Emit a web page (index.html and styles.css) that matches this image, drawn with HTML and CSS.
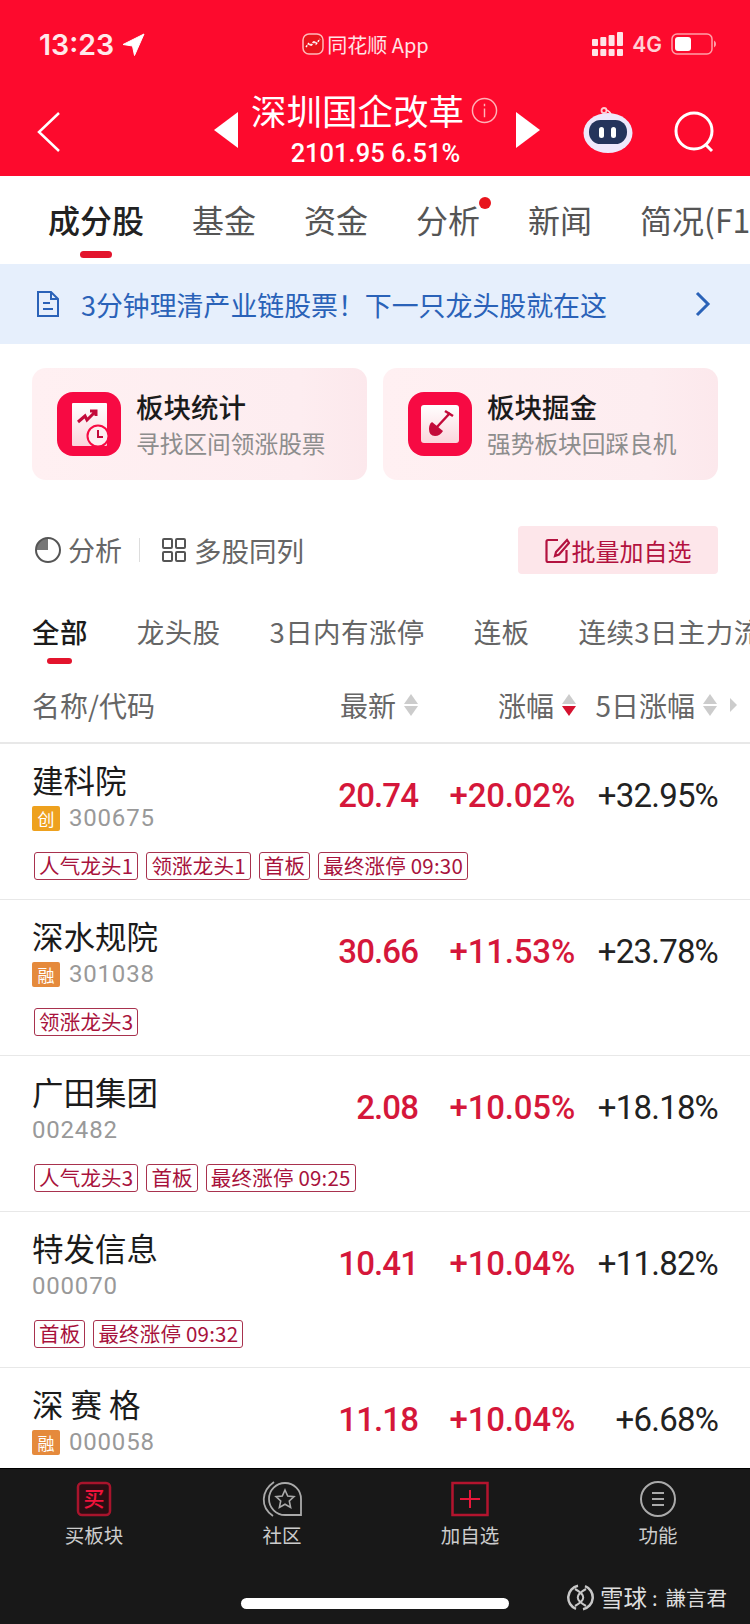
FILE: index.html
```html
<!DOCTYPE html>
<html lang="zh-CN">
<head>
    <meta charset="UTF-8">
    <meta name="viewport" content="width=device-width, initial-scale=1.0">
    <title>深圳国企改革</title>
    <link rel="stylesheet" href="styles.css">
</head>
<body>
    <div class="page">
        <header class="top">
            <div class="status">
                <div class="status-time">
                    <span>13:23</span>
                    <svg width="23" height="23" viewBox="0 0 23 23"><path d="M22 1 1 11.500 10.500 13 12.500 22.500Z" fill="#fff" stroke="#fff" stroke-linejoin="round"/></svg>
                </div>
                <div class="status-app">
                    <svg width="22" height="22" viewBox="0 0 22 22"><rect x="1" y="1" width="20" height="20" rx="6" fill="#e8141c" stroke="#ffb9b9" stroke-width="1.500"/><path d="M4 14 7 10 9 13 12 8 14 11 18 6" fill="none" stroke="#fff" stroke-width="1.500" stroke-dasharray="2 1"/></svg>
                    <span>同花顺 App</span>
                </div>
                <div class="status-right">
                    <svg width="31" height="24" viewBox="0 0 31 24" fill="#ffe3e6"><rect x="0" y="7" width="6" height="7" rx="1"/><rect x="8.300" y="5" width="6" height="9" rx="1"/><rect x="16.600" y="3" width="6" height="11" rx="1"/><rect x="25" y="0" width="6" height="14" rx="1"/><rect x="0" y="17" width="6" height="7" rx="1"/><rect x="8.300" y="17" width="6" height="7" rx="1"/><rect x="16.600" y="17" width="6" height="7" rx="1"/><rect x="25" y="17" width="6" height="7" rx="1"/></svg>
                    <span class="status-net">4G</span>
                    <svg width="46" height="24" viewBox="0 0 46 24"><rect x="1" y="2" width="40" height="20" rx="5" fill="none" stroke="#ffa0a8" stroke-width="1.500"/><rect x="4" y="5" width="16" height="14" rx="3" fill="#fff"/><path d="M43 8.500a4 4 0 0 1 0 7z" fill="#ffa0a8"/></svg>
                </div>
            </div>
            <div class="nav">
                <svg class="nav-back" width="26" height="42" viewBox="0 0 26 42"><path d="M23 2 3 21l20 19" fill="none" stroke="#fff" stroke-width="2.500"/></svg>
                <div class="nav-center">
                    <svg class="nav-arrow" width="24" height="36" viewBox="0 0 24 36"><path d="M24 0v36L0 18z" fill="#fff"/></svg>
                    <div class="nav-title">
                        <div class="nav-name">
                            <span>深圳国企改革</span>
                            <svg width="27" height="27" viewBox="0 0 28 28" fill="none" stroke="#ffb3b8" stroke-width="1.500"><circle cx="14" cy="14" r="12.500"/><path d="M14 12v9M14 7v2.500"/></svg>
                        </div>
                        <div class="nav-quote">2101.95 6.51%</div>
                    </div>
                    <svg class="nav-arrow" width="24" height="36" viewBox="0 0 24 36"><path d="M0 0v36l24-18z" fill="#fff"/></svg>
                </div>
                <svg class="nav-robot" width="50" height="46" viewBox="0 0 50 46"><circle cx="21" cy="3.500" r="2.500" fill="none" stroke="#ffc9cf" stroke-width="1.800"/><path d="M23 3q4 1 5 5" fill="none" stroke="#ffdde0" stroke-width="1.800"/><ellipse cx="25" cy="26" rx="24.500" ry="20" fill="#efe8fb"/><rect x="6" y="13" width="38" height="24" rx="11.500" fill="#25345c"/><rect x="16" y="20" width="5" height="11" rx="2.500" fill="#fff"/><rect x="28" y="20" width="5" height="11" rx="2.500" fill="#fff"/></svg>
                <svg class="nav-search" width="42" height="42" viewBox="0 0 42 42" fill="none" stroke="#fff" stroke-width="3"><circle cx="20" cy="20" r="18"/><path d="m31 33 7 7"/></svg>
            </div>
        </header>

        <nav class="tabs">
            <span class="tab tab-on">成分股</span>
            <span class="tab">基金</span>
            <span class="tab">资金</span>
            <span class="tab tab-dot">分析</span>
            <span class="tab">新闻</span>
            <span class="tab">简况(F10)</span>
        </nav>

        <div class="banner">
            <svg width="24" height="28" viewBox="0 0 24 28" fill="none" stroke="#2a62b8" stroke-width="2"><path d="M2 2h13l7 7v17H2zM15 2v7h7M7 13h7M7 19h10"/></svg>
            <span class="banner-text">3分钟理清产业链股票！下一只龙头股就在这</span>
            <svg width="16" height="26" viewBox="0 0 16 26"><path d="m2 2 11 11L2 24" fill="none" stroke="#2a62b8" stroke-width="3"/></svg>
        </div>

        <div class="cards">
            <div class="card">
                <svg class="card-icon" width="66" height="66" viewBox="0 0 66 66"><defs><linearGradient id="inner" x1="0" y1="0" x2="0" y2="1"><stop offset="0" stop-color="#fff"/><stop offset="1" stop-color="#fbd5dc"/></linearGradient></defs><rect x="1" y="1" width="64" height="64" rx="16" fill="#f70a43"/><rect x="16" y="12" width="35" height="43" rx="1" fill="url(#inner)"/><path d="m22 31 7-6 2 4 8-8m-5-1h6v5" fill="none" stroke="#c30a3a" stroke-width="3"/><circle cx="42" cy="45" r="10.500" fill="#fdeef0" stroke="#f70a43" stroke-width="2"/><path d="M42 39v7h5" fill="none" stroke="#c30a3a" stroke-width="2"/></svg>
                <div class="card-text">
                    <div class="card-title">板块统计</div>
                    <div class="card-sub">寻找区间领涨股票</div>
                </div>
            </div>
            <div class="card">
                <svg class="card-icon" width="66" height="66" viewBox="0 0 66 66"><rect x="1" y="1" width="64" height="64" rx="16" fill="#f70a43"/><rect x="14" y="14" width="38" height="38" rx="3" fill="url(#inner)"/><path d="m30 36 13-14" stroke="#c30a3a" stroke-width="2.500"/><path d="m38 20 8 5" stroke="#c30a3a" stroke-width="2.500"/><path d="M25 31 36 40Q33 45 28 45 22 45 22 38 22 33 25 31z" fill="#c30a3a"/></svg>
                <div class="card-text">
                    <div class="card-title">板块掘金</div>
                    <div class="card-sub">强势板块回踩良机</div>
                </div>
            </div>
        </div>

        <div class="tools">
            <svg width="28" height="28" viewBox="0 0 28 28"><path d="M14 14V2A12 12 0 0 0 2 14z" fill="#777"/><circle cx="14" cy="14" r="12" fill="none" stroke="#555" stroke-width="2"/></svg>
            <span class="tool-label">分析</span>
            <span class="tool-sep"></span>
            <svg width="24" height="24" viewBox="0 0 24 24" fill="none" stroke="#555" stroke-width="2"><rect x="1" y="1" width="9" height="9" rx="1"/><rect x="14" y="1" width="9" height="9" rx="1"/><rect x="1" y="14" width="9" height="9" rx="1"/><rect x="14" y="14" width="9" height="9" rx="1"/></svg>
            <span class="tool-label">多股同列</span>
            <div class="batch">
                <svg width="25" height="25" viewBox="0 0 25 25" fill="none" stroke="#b3123f" stroke-width="2.200"><path d="M13 2H3a1.500 1.500 0 0 0-1.500 1.500v19A1.500 1.500 0 0 0 3 24h17a1.500 1.500 0 0 0 1.500-1.500V12M22 2 11 14l-1 4 4-1.500L24 5z"/></svg>
                <span>批量加自选</span>
            </div>
        </div>

        <div class="subtabs">
            <span class="subtab subtab-on">全部</span>
            <span class="subtab">龙头股</span>
            <span class="subtab">3日内有涨停</span>
            <span class="subtab">连板</span>
            <span class="subtab">连续3日主力流入</span>
        </div>

        <div class="thead">
            <span class="th-name">名称/代码</span>
            <span class="th th-price">最新<i class="sort"><b></b><b></b></i></span>
            <span class="th th-pct">涨幅<i class="sort sort-down"><b></b><b></b></i></span>
            <span class="th th-five">5日涨幅<i class="sort"><b></b><b></b></i></span>
            <i class="more"></i>
        </div>

        <div class="list">
            <div class="row">
                <div class="row-main">
                    <div class="stock">
                        <div class="stock-name">建科院</div>
                        <div class="stock-code"><span class="mark mark-chuang">创</span>300675</div>
                    </div>
                    <span class="price">20.74</span>
                    <span class="pct">+20.02%</span>
                    <span class="five">+32.95%</span>
                </div>
                <div class="tags"><span class="tag">人气龙头1</span><span class="tag">领涨龙头1</span><span class="tag">首板</span><span class="tag">最终涨停 09:30</span></div>
            </div>
            <div class="row">
                <div class="row-main">
                    <div class="stock">
                        <div class="stock-name">深水规院</div>
                        <div class="stock-code"><span class="mark mark-rong">融</span>301038</div>
                    </div>
                    <span class="price">30.66</span>
                    <span class="pct">+11.53%</span>
                    <span class="five">+23.78%</span>
                </div>
                <div class="tags"><span class="tag">领涨龙头3</span></div>
            </div>
            <div class="row">
                <div class="row-main">
                    <div class="stock">
                        <div class="stock-name">广田集团</div>
                        <div class="stock-code">002482</div>
                    </div>
                    <span class="price">2.08</span>
                    <span class="pct">+10.05%</span>
                    <span class="five">+18.18%</span>
                </div>
                <div class="tags"><span class="tag">人气龙头3</span><span class="tag">首板</span><span class="tag">最终涨停 09:25</span></div>
            </div>
            <div class="row">
                <div class="row-main">
                    <div class="stock">
                        <div class="stock-name">特发信息</div>
                        <div class="stock-code">000070</div>
                    </div>
                    <span class="price">10.41</span>
                    <span class="pct">+10.04%</span>
                    <span class="five">+11.82%</span>
                </div>
                <div class="tags"><span class="tag">首板</span><span class="tag">最终涨停 09:32</span></div>
            </div>
            <div class="row row-cut">
                <div class="row-main">
                    <div class="stock">
                        <div class="stock-name">深 赛 格</div>
                        <div class="stock-code"><span class="mark mark-rong">融</span>000058</div>
                    </div>
                    <span class="price">11.18</span>
                    <span class="pct">+10.04%</span>
                    <span class="five">+6.68%</span>
                </div>
            </div>
        </div>

        <footer class="bottom">
            <div class="bottom-items">
                <div class="bottom-item">
                    <svg width="36" height="36" viewBox="0 0 36 36"><rect x="2" y="2" width="32" height="32" rx="4" fill="#2a0e13" stroke="#a8142c" stroke-width="2.500"/><text x="18" y="25" text-anchor="middle" class="icon-char">买</text></svg>
                    <span>买板块</span>
                </div>
                <div class="bottom-item">
                    <svg width="42" height="36" viewBox="0 0 42 36" fill="none" stroke="#aaa" stroke-width="1.800"><path d="M13 1C0 10-1 26 12 35"/><path d="M24 2a16 16 0 0 1 16 16v16H24a16 16 0 0 1 0-32z"/><path d="m24 9 2.700 6 6.300.7-4.700 4.300 1.300 6.400-5.600-3.200-5.600 3.200 1.300-6.400-4.700-4.300 6.300-.7z" stroke-width="1.600"/></svg>
                    <span>社区</span>
                </div>
                <div class="bottom-item">
                    <svg width="38" height="36" viewBox="0 0 38 36" fill="none" stroke="#b3142e"><rect x="1.500" y="2" width="35" height="32" stroke-width="2.500"/><path d="M19 9v18M9 18h20" stroke="#e8173a" stroke-width="2"/></svg>
                    <span>加自选</span>
                </div>
                <div class="bottom-item">
                    <svg width="36" height="36" viewBox="0 0 36 36" fill="none" stroke="#aaa" stroke-width="2"><circle cx="18" cy="18" r="17"/><path d="M12 12h12M12 18h12M12 24h12"/></svg>
                    <span>功能</span>
                </div>
            </div>
            <div class="home-bar"></div>
            <div class="mark-water">
                <svg width="27" height="27" viewBox="0 0 27 27" fill="none" stroke="#c8c8c8" stroke-width="2.500"><path d="M11 1.800A12 12 0 0 0 9 24.800M16 25.200A12 12 0 0 0 18 2.200"/><path d="M8 5C19 11 19 16 8 22M19 5C8 11 8 16 19 22" stroke-width="2"/></svg>
                <span class="water-brand">雪球</span>
                <span class="water-colon">:</span>
                <span class="water-name">謙言君</span>
            </div>
        </footer>
    </div>
</body>
</html>
```

FILE: styles.css
```css
* {
    box-sizing: border-box;
}
body {
    margin: 0;
    background: #fff;
    font-family: "Noto Sans CJK SC", Roboto, sans-serif;
}
.page {
    width: 750px;
    height: 1624px;
    overflow: hidden;
    display: flex;
    flex-direction: column;
}

/* red header */
.top {
    height: 176px;
    background: #fd0a2d;
    color: #fff;
    flex: none;
}
.status {
    height: 88px;
    padding: 0 33px 0 39px;
    display: flex;
    align-items: center;
    justify-content: space-between;
}
.status-time {
    width: 200px;
    display: flex;
    align-items: center;
    gap: 8px;
    font-family: Inter, sans-serif;
    font-size: 28.500px;
    font-weight: 600;
    color: #ffe9eb;
}
.status-app {
    display: flex;
    align-items: center;
    gap: 3px;
    font-size: 20px;
    color: #ffe3e6;
    margin-left: -25px;
}
.status-right {
    width: 200px;
    display: flex;
    align-items: center;
    justify-content: flex-end;
    gap: 9px;
}
.status-net {
    font-family: Inter, sans-serif;
    font-size: 21px;
    font-weight: 600;
    color: #ffd0d5;
}
.nav {
    height: 88px;
    padding: 0 34px 0 36px;
    display: flex;
    align-items: center;
}
.nav-back {
    flex: none;
}
.nav-center {
    width: 326px;
    margin-left: 152px;
    margin-top: -4px;
    display: flex;
    align-items: center;
    justify-content: space-between;
}
.nav-arrow {
    flex: none;
}
.nav-title {
    text-align: center;
}
.nav-name {
    display: flex;
    align-items: center;
    gap: 7px;
    margin-left: -5px;
    font-size: 35.500px;
    line-height: 46px;
    white-space: nowrap;
}
.nav-quote {
    margin-right: 3px;
    font-family: Roboto, sans-serif;
    font-size: 25.500px;
    font-weight: 500;
    line-height: 40px;
}
.nav-robot {
    flex: none;
    margin-left: 43px;
    margin-top: -4px;
}
.nav-search {
    flex: none;
    margin-left: 41px;
}

/* main tabs */
.tabs {
    height: 88px;
    flex: none;
    padding-left: 48px;
    display: flex;
    gap: 48px;
    white-space: nowrap;
}
.tab {
    position: relative;
    font-size: 32px;
    line-height: 86px;
    color: #555;
}
.tab-on {
    color: #222;
    font-weight: 500;
}
.tab-on::after {
    content: "";
    position: absolute;
    left: 32px;
    bottom: 6px;
    width: 32px;
    height: 7px;
    border-radius: 4px;
    background: #e3142d;
}
.tab-dot::after {
    content: "";
    position: absolute;
    right: -11px;
    top: 21px;
    width: 12px;
    height: 12px;
    border-radius: 50%;
    background: #e8141c;
}

/* banner */
.banner {
    height: 80px;
    flex: none;
    padding: 0 39px 0 36px;
    background: #e6effc;
    display: flex;
    align-items: center;
}
.banner-text {
    flex: 1;
    margin-left: 21px;
    font-size: 26.900px;
    color: #2a62b8;
}

/* cards */
.cards {
    flex: none;
    margin-top: 24px;
    padding: 0 32px;
    display: flex;
    gap: 16px;
}
.card {
    flex: 1;
    height: 112px;
    padding-left: 24px;
    border-radius: 14px;
    background: linear-gradient(90deg, #fff0f2 0%, #fdedf0 80%, #fce8ec 100%);
    display: flex;
    align-items: center;
}
.card-icon {
    flex: none;
}
.card-text {
    margin-left: 14px;
}
.card-title {
    font-size: 27.500px;
    font-weight: 500;
    line-height: 38px;
    color: #1b1b1b;
}
.card-sub {
    font-size: 23.700px;
    line-height: 36px;
    color: #8d8d8d;
}

/* toolbar */
.tools {
    flex: none;
    height: 48px;
    margin-top: 46px;
    padding: 0 32px 0 34px;
    display: flex;
    align-items: center;
}
.tool-label {
    margin-left: 6px;
    font-size: 27px;
    line-height: 46px;
    color: #666;
}
.tool-sep {
    width: 1px;
    height: 24px;
    margin: 0 22px 0 17px;
    background: #ddd;
}
.tool-label:last-of-type {
    margin-left: 8px;
    font-size: 27.500px;
}
.batch {
    margin-left: auto;
    width: 200px;
    height: 48px;
    border-radius: 4px;
    background: #fde6ea;
    color: #b3123f;
    font-size: 24px;
    display: flex;
    align-items: center;
    justify-content: center;
    gap: 2px;
}

/* sub tabs */
.subtabs {
    flex: none;
    height: 82px;
    margin-top: 12px;
    padding-left: 32px;
    display: flex;
    gap: 49px;
    white-space: nowrap;
}
.subtab {
    position: relative;
    font-size: 27.500px;
    line-height: 90px;
    color: #666;
    letter-spacing: 0.400px;
}
.subtab-on {
    color: #1b1b1b;
    font-weight: 500;
}
.subtab-on::after {
    content: "";
    position: absolute;
    left: 15px;
    bottom: 4px;
    width: 25px;
    height: 6px;
    border-radius: 3px;
    background: #e3142d;
}

/* list header */
.thead {
    flex: none;
    height: 76px;
    padding-left: 32px;
    border-bottom: 2px solid #e8e8e8;
    display: flex;
    align-items: center;
    font-size: 28px;
    color: #666;
    white-space: nowrap;
}
.th-name {
    width: 308px;
}
.th {
    display: flex;
    align-items: center;
    justify-content: flex-end;
    gap: 8px;
}
.th-price {
    width: 78px;
}
.th-pct {
    width: 158px;
}
.th-five {
    width: 141px;
}
.sort {
    display: flex;
    flex-direction: column;
    gap: 2px;
}
.sort b {
    width: 0;
    height: 0;
    border-left: 7px solid transparent;
    border-right: 7px solid transparent;
    border-bottom: 10px solid #ccc;
}
.sort b:last-child {
    border-bottom: 0;
    border-top: 10px solid #ccc;
}
.sort-down b:last-child {
    border-top-color: #d5122f;
}
.more {
    margin-left: 13px;
    border-top: 7px solid transparent;
    border-bottom: 7px solid transparent;
    border-left: 7px solid #ccc;
}

/* rows */
.row {
    flex: none;
    height: 156px;
    padding: 16px 32px 0;
    border-bottom: 1px solid #e8e8e8;
}
.row-cut {
    border-bottom: 0;
    height: 100px;
}
.row-main {
    display: flex;
    align-items: center;
    height: 78px;
}
.stock {
    width: 229px;
}
.stock-name {
    font-size: 31.500px;
    line-height: 38px;
    color: #1b1b1b;
    white-space: nowrap;
}
.stock-code {
    display: flex;
    align-items: center;
    height: 40px;
    font-family: Roboto, sans-serif;
    font-size: 24px;
    color: #999;
    letter-spacing: 0.800px;
}
.mark {
    width: 28px;
    height: 25px;
    margin-right: 9px;
    border-radius: 2px;
    font-family: "Noto Sans CJK SC", sans-serif;
    font-size: 17px;
    line-height: 25px;
    text-align: center;
    color: #fff;
    letter-spacing: 0;
}
.mark-chuang {
    background: #eea11e;
}
.mark-rong {
    background: #e58a3c;
}
.price, .pct, .five {
    font-family: Roboto, sans-serif;
    font-size: 33px;
    text-align: right;
    margin-top: -8px;
}
.price, .pct {
    font-weight: 500;
    color: #d5173a;
}
.price {
    width: 157px;
    letter-spacing: -0.900px;
}
.pct {
    width: 157px;
    letter-spacing: -0.200px;
}
.five {
    width: 143px;
    letter-spacing: -0.800px;
    color: #222;
}
.tags {
    margin-top: 14px;
    margin-left: 2px;
    display: flex;
    gap: 8px;
}
.tag {
    height: 28px;
    padding: 0 4px;
    border: 1px solid #a8324e;
    border-radius: 3px;
    font-size: 20.500px;
    line-height: 25px;
    letter-spacing: 0.200px;
    color: #a8123c;
    white-space: nowrap;
}

/* bottom bar */
.bottom {
    position: relative;
    flex: 1;
    background: #181818;
    border-top: 1px solid #000;
}
.bottom-items {
    display: grid;
    grid-template-columns: repeat(4, 188px);
    padding-top: 12px;
}
.bottom-item {
    display: flex;
    flex-direction: column;
    align-items: center;
    font-size: 19.500px;
    line-height: 26px;
    color: #ccc;
    gap: 5px;
}
.icon-char {
    font-family: "Noto Sans CJK SC", sans-serif;
    font-size: 21px;
    font-weight: 500;
    fill: #f0133c;
}
.home-bar {
    position: absolute;
    left: 241px;
    bottom: 15px;
    width: 268px;
    height: 11px;
    border-radius: 6px;
    background: #fff;
}
.mark-water {
    position: absolute;
    right: 23px;
    bottom: 10px;
    display: flex;
    align-items: center;
    color: #ddd;
    white-space: nowrap;
}
.water-brand {
    margin-left: 6px;
    font-size: 23.500px;
}
.water-colon {
    margin: 0 8px 0 5px;
    font-size: 20px;
}
.water-name {
    font-size: 20.500px;
}
```
